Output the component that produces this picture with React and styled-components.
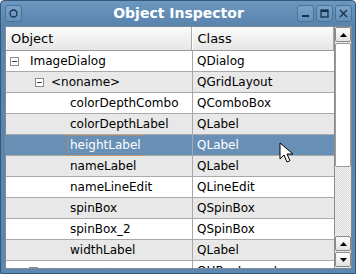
import styled, { createGlobalStyle } from 'styled-components'

const Global = createGlobalStyle`
  html, body { margin: 0; padding: 0; background: #ffffff; }
  body { font-family: "DejaVu Sans", sans-serif; }
`

const Window = styled.div`
  width: 356px;
  height: 274px;
  box-sizing: border-box;
  border: 1px solid #34577a;
  border-radius: 4px 4px 0 0;
  background: linear-gradient(#6c97bf, #5884ae 24px, #5b87b0);
  display: flex;
  flex-direction: column;
  overflow: hidden;
  position: relative;
`

const TitleBar = styled.div`
  height: 24px;
  flex: none;
  display: flex;
  align-items: center;
  padding: 0 3px 0 4px;
  gap: 2px;
`

const Title = styled.div`
  flex: 1;
  text-align: center;
  color: #ffffff;
  font-weight: bold;
  font-size: 14px;
  padding-left: 38px;
`

const TitleButton = styled.div`
  width: 17px;
  height: 17px;
  box-sizing: border-box;
  border: 1px solid #4a739a;
  border-radius: 3px;
  background: linear-gradient(#7aa3c9, #6690b8);
  display: flex;
  align-items: center;
  justify-content: center;
`

const Body = styled.div`
  flex: 1;
  margin: 1px 3px 4px 4px;
  border: 1px solid #7e8a96;
  background: #ffffff;
  display: flex;
  overflow: hidden;
`

const Tree = styled.div`
  width: 329px;
  display: flex;
  flex-direction: column;
  overflow: hidden;
  font-size: 12px;
  color: #000000;
`

const Header = styled.div`
  height: 23px;
  flex: none;
  display: flex;
  background: linear-gradient(#fbfbfb, #e6e6e6);
  border-bottom: 1px solid #9a9a9a;
`

const HeaderCell = styled.div`
  width: ${p => p.$w}px;
  box-sizing: border-box;
  display: flex;
  align-items: center;
  padding-left: 4px;
  font-size: 13px;
  border-right: 1px solid #a8a8a8;
  border-left: 1px solid #ffffff;
`

const Row = styled.div`
  height: 20px;
  flex: none;
  display: flex;
  border-bottom: 1px solid #a9a9a9;
  background: ${p => (p.$sel ? '#6890b6' : p.$alt ? '#e8e8e8' : '#ffffff')};
  color: ${p => (p.$sel ? '#ffffff' : '#000000')};
`

const NameCell = styled.div`
  width: 187px;
  box-sizing: border-box;
  display: flex;
  align-items: center;
  padding-left: ${p => p.$pad}px;
  border-right: 1px solid #a9a9a9;
`

const ClassCell = styled.div`
  flex: 1;
  display: flex;
  align-items: center;
  padding-left: 4px;
  white-space: nowrap;
`

const Expander = styled.span`
  width: 9px;
  height: 9px;
  box-sizing: border-box;
  border: 1px solid #8c8c8c;
  background: #ffffff;
  position: relative;
  margin-right: ${p => p.$gap}px;
  flex: none;
  &::after {
    content: '';
    position: absolute;
    left: 1px;
    right: 1px;
    top: 3px;
    height: 1px;
    background: #404040;
  }
`

const Label = styled.span`
  padding: 1px 2px;
  margin-left: -2px;
  border: 1px dotted ${p => (p.$focus ? '#d88a3c' : 'transparent')};
  border-right: none;
  line-height: 17px;
  white-space: nowrap;
`

const Scroll = styled.div`
  width: 16px;
  display: flex;
  flex-direction: column;
  border-left: 1px solid #8c8c8c;
  background-color: #f4f4f4;
  background-image: linear-gradient(45deg, #d8d8d8 25%, transparent 25%, transparent 75%, #d8d8d8 75%),
    linear-gradient(45deg, #d8d8d8 25%, transparent 25%, transparent 75%, #d8d8d8 75%);
  background-size: 2px 2px;
  background-position: 0 0, 1px 1px;
`

const ArrowButton = styled.div`
  height: 15px;
  flex: none;
  box-sizing: border-box;
  border: 1px solid #8a8a8a;
  border-radius: 2px;
  background: linear-gradient(#fdfdfd, #e2e2e2);
  display: flex;
  align-items: center;
  justify-content: center;
  margin-bottom: 1px;
`

const Thumb = styled.div`
  height: 124px;
  flex: none;
  box-sizing: border-box;
  border: 1px solid #9a9a9a;
  border-radius: 2px;
  background: #ffffff;
  display: flex;
  align-items: center;
  justify-content: center;
`

const Grip = styled.div`
  width: 11px;
  height: 14px;
  background-image: radial-gradient(#b4b4b4 45%, transparent 50%);
  background-size: 2px 2px;
`

const Track = styled.div`
  flex: 1;
`

const Cursor = styled.svg`
  position: absolute;
  left: 278px;
  top: 141px;
`

const Tri = ({ down }) => (
  <svg width="9" height="6" viewBox="0 0 9 6">
    <path d={down ? 'M1 1h7L4.5 5z' : 'M4.5 1L8 5H1z'} fill="#000" />
  </svg>
)

const rows = [
  { name: 'ImageDialog', cls: 'QDialog', pad: 4, gap: 10 },
  { name: '<noname>', cls: 'QGridLayout', pad: 29, gap: 6 },
  { name: 'colorDepthCombo', cls: 'QComboBox', pad: 63 },
  { name: 'colorDepthLabel', cls: 'QLabel', pad: 63 },
  { name: 'heightLabel', cls: 'QLabel', pad: 63, sel: true },
  { name: 'nameLabel', cls: 'QLabel', pad: 63 },
  { name: 'nameLineEdit', cls: 'QLineEdit', pad: 63 },
  { name: 'spinBox', cls: 'QSpinBox', pad: 63 },
  { name: 'spinBox_2', cls: 'QSpinBox', pad: 63 },
  { name: 'widthLabel', cls: 'QLabel', pad: 63 },
  { name: '<noname>', cls: 'QHBoxLayout', pad: 23, gap: 6 },
]

export default function App() {
  return (
    <>
      <Global />
      <Window>
        <TitleBar>
          <TitleButton>
            <svg width="9" height="9" viewBox="0 0 9 9">
              <circle cx="4.5" cy="4.5" r="3.5" fill="none" stroke="#17314d" strokeWidth="1.3" />
            </svg>
          </TitleButton>
          <Title>Object Inspector</Title>
          <TitleButton>
            <svg width="9" height="9" viewBox="0 0 9 9">
              <rect x="1" y="6" width="7" height="2" fill="#17314d" />
            </svg>
          </TitleButton>
          <TitleButton>
            <svg width="9" height="9" viewBox="0 0 9 9">
              <rect x="1" y="1" width="7" height="7" fill="none" stroke="#17314d" strokeWidth="1.3" />
              <rect x="1" y="1" width="7" height="2" fill="#17314d" />
            </svg>
          </TitleButton>
          <TitleButton>
            <svg width="9" height="9" viewBox="0 0 9 9">
              <path d="M1 1L8 8M8 1L1 8" stroke="#17314d" strokeWidth="1.4" />
            </svg>
          </TitleButton>
        </TitleBar>
        <Body>
          <Tree>
            <Header>
              <HeaderCell $w={187}>Object</HeaderCell>
              <HeaderCell $w={142}>Class</HeaderCell>
            </Header>
            {rows.map((r, i) => (
              <Row key={i} $alt={i % 2 === 1} $sel={r.sel}>
                <NameCell $pad={r.pad}>
                  {r.gap !== undefined && <Expander $gap={r.gap} />}
                  <Label $focus={r.sel}>{r.name}</Label>
                </NameCell>
                <ClassCell>{r.cls}</ClassCell>
              </Row>
            ))}
          </Tree>
          <Scroll>
            <ArrowButton><Tri /></ArrowButton>
            <Thumb><Grip /></Thumb>
            <Track />
            <ArrowButton><Tri /></ArrowButton>
            <ArrowButton><Tri down /></ArrowButton>
          </Scroll>
        </Body>
        <Cursor width="14" height="22" viewBox="0 0 14 22">
          <path d="M1 1v16l4-4 3 7 3-1.3-3-6.7h6z" fill="#ffffff" stroke="#000000" strokeWidth="1" strokeLinejoin="round" />
        </Cursor>
      </Window>
    </>
  )
}
